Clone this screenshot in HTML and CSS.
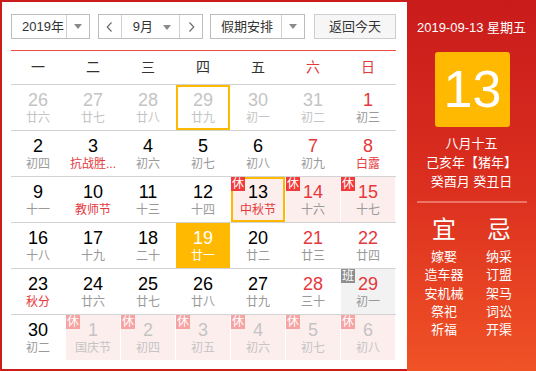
FILE: index.html
```html
<!DOCTYPE html>
<html lang="zh">
<head>
<meta charset="utf-8">
<title>万年历</title>
<link rel="stylesheet" href="styles.css">
</head>
<body>
<div class="wrap">
  <div class="cal">
    <div class="toolbar">
      <div class="sel year"><span class="sel-text">2019年</span><span class="sel-arrow"><i class="tri"></i></span></div>
      <div class="sel month">
        <span class="nav"><svg width="7" height="10" viewBox="0 0 7 10"><polyline points="5.5,0.5 1.2,5 5.5,9.5" fill="none" stroke="#666" stroke-width="1.1"/></svg></span>
        <span class="sel-text mtext">9月<i class="tri"></i></span>
        <span class="nav"><svg width="7" height="10" viewBox="0 0 7 10"><polyline points="1.5,0.5 5.8,5 1.5,9.5" fill="none" stroke="#666" stroke-width="1.1"/></svg></span>
      </div>
      <div class="sel hol-sel"><span class="sel-text">假期安排</span><span class="sel-arrow"><i class="tri"></i></span></div>
      <div class="btn">返回今天</div>
    </div>
    <div class="weekdays">
      <span>一</span><span>二</span><span>三</span><span>四</span><span>五</span><span class="red">六</span><span class="red">日</span>
    </div>
    <div class="row">
      <div class="cell other"><b>26</b><em>廿六</em></div>
      <div class="cell other"><b>27</b><em>廿七</em></div>
      <div class="cell other"><b>28</b><em>廿八</em></div>
      <div class="cell other hover"><b>29</b><em>廿九</em></div>
      <div class="cell other"><b>30</b><em>初一</em></div>
      <div class="cell other"><b>31</b><em>初二</em></div>
      <div class="cell wk"><b>1</b><em>初三</em></div>
    </div>
    <div class="row">
      <div class="cell"><b>2</b><em>初四</em></div>
      <div class="cell fest"><b>3</b><em>抗战胜...</em></div>
      <div class="cell"><b>4</b><em>初六</em></div>
      <div class="cell"><b>5</b><em>初七</em></div>
      <div class="cell"><b>6</b><em>初八</em></div>
      <div class="cell wk"><b>7</b><em>初九</em></div>
      <div class="cell wk fest"><b>8</b><em>白露</em></div>
    </div>
    <div class="row">
      <div class="cell"><b>9</b><em>十一</em></div>
      <div class="cell fest"><b>10</b><em>教师节</em></div>
      <div class="cell"><b>11</b><em>十三</em></div>
      <div class="cell"><b>12</b><em>十四</em></div>
      <div class="cell hol today fest"><span class="badge">休</span><b>13</b><em>中秋节</em></div>
      <div class="cell hol wk"><span class="badge">休</span><b>14</b><em>十六</em></div>
      <div class="cell hol wk"><span class="badge">休</span><b>15</b><em>十七</em></div>
    </div>
    <div class="row">
      <div class="cell"><b>16</b><em>十八</em></div>
      <div class="cell"><b>17</b><em>十九</em></div>
      <div class="cell"><b>18</b><em>二十</em></div>
      <div class="cell picked"><b>19</b><em>廿一</em></div>
      <div class="cell"><b>20</b><em>廿二</em></div>
      <div class="cell wk"><b>21</b><em>廿三</em></div>
      <div class="cell wk"><b>22</b><em>廿四</em></div>
    </div>
    <div class="row">
      <div class="cell fest"><b>23</b><em>秋分</em></div>
      <div class="cell"><b>24</b><em>廿六</em></div>
      <div class="cell"><b>25</b><em>廿七</em></div>
      <div class="cell"><b>26</b><em>廿八</em></div>
      <div class="cell"><b>27</b><em>廿九</em></div>
      <div class="cell wk"><b>28</b><em>三十</em></div>
      <div class="cell work wk"><span class="badge grey">班</span><b>29</b><em>初一</em></div>
    </div>
    <div class="row">
      <div class="cell"><b>30</b><em>初二</em></div>
      <div class="cell hol other"><span class="badge">休</span><b>1</b><em>国庆节</em></div>
      <div class="cell hol other"><span class="badge">休</span><b>2</b><em>初四</em></div>
      <div class="cell hol other"><span class="badge">休</span><b>3</b><em>初五</em></div>
      <div class="cell hol other"><span class="badge">休</span><b>4</b><em>初六</em></div>
      <div class="cell hol other"><span class="badge">休</span><b>5</b><em>初七</em></div>
      <div class="cell hol other"><span class="badge">休</span><b>6</b><em>初八</em></div>
    </div>
  </div>
  <div class="panel">
    <div class="p-date">2019-09-13 星期五</div>
    <div class="p-day">13</div>
    <div class="p-lunar">
      <div>八月十五</div>
      <div>己亥年【猪年】</div>
      <div>癸酉月 癸丑日</div>
    </div>
    <div class="p-sep"></div>
    <div class="yiji">
      <div class="col">
        <div class="yj-head">宜</div>
        <div>嫁娶</div><div>造车器</div><div>安机械</div><div>祭祀</div><div>祈福</div>
      </div>
      <div class="col">
        <div class="yj-head">忌</div>
        <div>纳采</div><div>订盟</div><div>架马</div><div>词讼</div><div>开渠</div>
      </div>
    </div>
  </div>
</div>
</body>
</html>
```
FILE: styles.css
```css
* { box-sizing: border-box; margin: 0; padding: 0; }
html, body { width: 536px; height: 371px; overflow: hidden; background: #fff; }
body {
  font-family: "Liberation Sans", "Noto Sans CJK SC", sans-serif;
  color: #333;
  font-size: 13px;
}
.wrap { display: flex; width: 536px; height: 371px; }
.cal {
  width: 407px;
  height: 371px;
  border: 2px solid #cc1d1d;
  border-right: none;
  padding: 12px 11px 9px 9px;
}
.toolbar {
  display: flex;
  height: 37px;
  padding-bottom: 11px;
  border-bottom: 1px solid #f0504a;
}
.sel {
  display: flex;
  height: 25px;
  border: 1px solid #bdbdbd;
  background: #fff;
  line-height: 23px;
}
.sel-text { padding-left: 10px; color: #333; position: relative; }
.sel-arrow {
  border-left: 1px solid #d0d0d0;
  width: 23px;
  display: flex;
  align-items: center;
  justify-content: center;
}
.tri {
  display: inline-block;
  width: 0; height: 0;
  border-left: 4px solid transparent;
  border-right: 4px solid transparent;
  border-top: 5px solid #8a8a8a;
}
.year { width: 79px; }
.year .sel-text { width: 55px; }
.month { width: 105px; margin-left: 8px; }
.nav {
  width: 22px;
  display: flex;
  align-items: center;
  justify-content: center;
}
.mtext {
  width: 60px;
  border-left: 1px solid #d0d0d0;
  border-right: 1px solid #d0d0d0;
  padding-left: 11px;
}
.mtext .tri { position: absolute; right: 8px; top: 10px; }
.hol-sel { width: 95px; margin-left: 7px; }
.hol-sel .sel-text { width: 70px; }
.hol-sel .sel-arrow { width: 23px; }
.btn {
  width: 82px;
  height: 25px;
  margin-left: 9px;
  border: 1px solid #cfcfcf;
  background: #f6f6f6;
  text-align: center;
  line-height: 23px;
  color: #333;
}
.weekdays {
  display: grid;
  grid-template-columns: repeat(7, 54px);
  column-gap: 1px;
  height: 33px;
  line-height: 33px;
  text-align: center;
  font-size: 14px;
  color: #333;
}
.weekdays .red { color: #e5383b; }
.row {
  display: grid;
  grid-template-columns: repeat(7, 54px);
  column-gap: 1px;
  height: 46px;
  border-top: 1px solid #d3d3d3;
}
.cell {
  position: relative;
  height: 45px;
  text-align: center;
  padding-top: 4px;
}
.cell b {
  display: block;
  font-weight: normal;
  font-size: 18px;
  line-height: 22px;
  color: #000;
}
.cell em {
  display: block;
  font-style: normal;
  font-size: 12px;
  line-height: 14px;
  color: #999;
  white-space: nowrap;
}
.cell.wk b { color: #e5383b; }
.cell.fest em { color: #e5383b; }
.cell.other b, .cell.other em { color: #c4c4c4; }
.cell.hol { background: #fdeeee; }
.cell.work { background: #f2f2f2; }
.badge {
  position: absolute;
  left: 0; top: 0;
  width: 14px; height: 14px;
  background: #f23a3a;
  color: #fff;
  font-size: 12px;
  line-height: 14px;
  text-align: center;
}
.badge.grey { background: #8e8e8e; }
.cell.other .badge { background: #f6a3a3; }
.cell.today, .cell.hover {
  border: 2px solid #ffb900;
  padding-top: 2px;
}
.cell.today .badge, .cell.hover .badge { left: -2px; top: -2px; }
.cell.picked { background: #ffb900; }
.cell.picked b, .cell.picked em { color: #fff; }

.panel {
  width: 129px;
  height: 371px;
  background: linear-gradient(180deg, #c91b1b 0%, #db2f1f 50%, #f05226 100%);
  color: #fff;
  display: flex;
  flex-direction: column;
  align-items: center;
}
.p-date {
  margin-top: 19px;
  line-height: 18px;
  font-size: 13px;
  white-space: nowrap;
}
.p-day {
  margin-top: 15px;
  width: 75px;
  height: 75px;
  background: #ffb900;
  border-radius: 3px;
  text-align: center;
  line-height: 75px;
  font-size: 52px;
  color: #fff;
  margin-left: 2px;
}
.p-lunar {
  margin-top: 7px;
  text-align: center;
  line-height: 19px;
  font-size: 13px;
  white-space: nowrap;
}
.p-sep {
  margin-top: 10px;
  width: 110px;
  height: 2px;
  background: rgba(255, 200, 190, 0.45);
}
.yiji {
  margin-top: 13px;
  display: grid;
  grid-template-columns: 55px 55px;
  text-align: center;
  font-size: 13px;
  line-height: 18.3px;
}
.yj-head {
  font-size: 24px;
  line-height: 28px;
  margin-bottom: 4px;
}
```
